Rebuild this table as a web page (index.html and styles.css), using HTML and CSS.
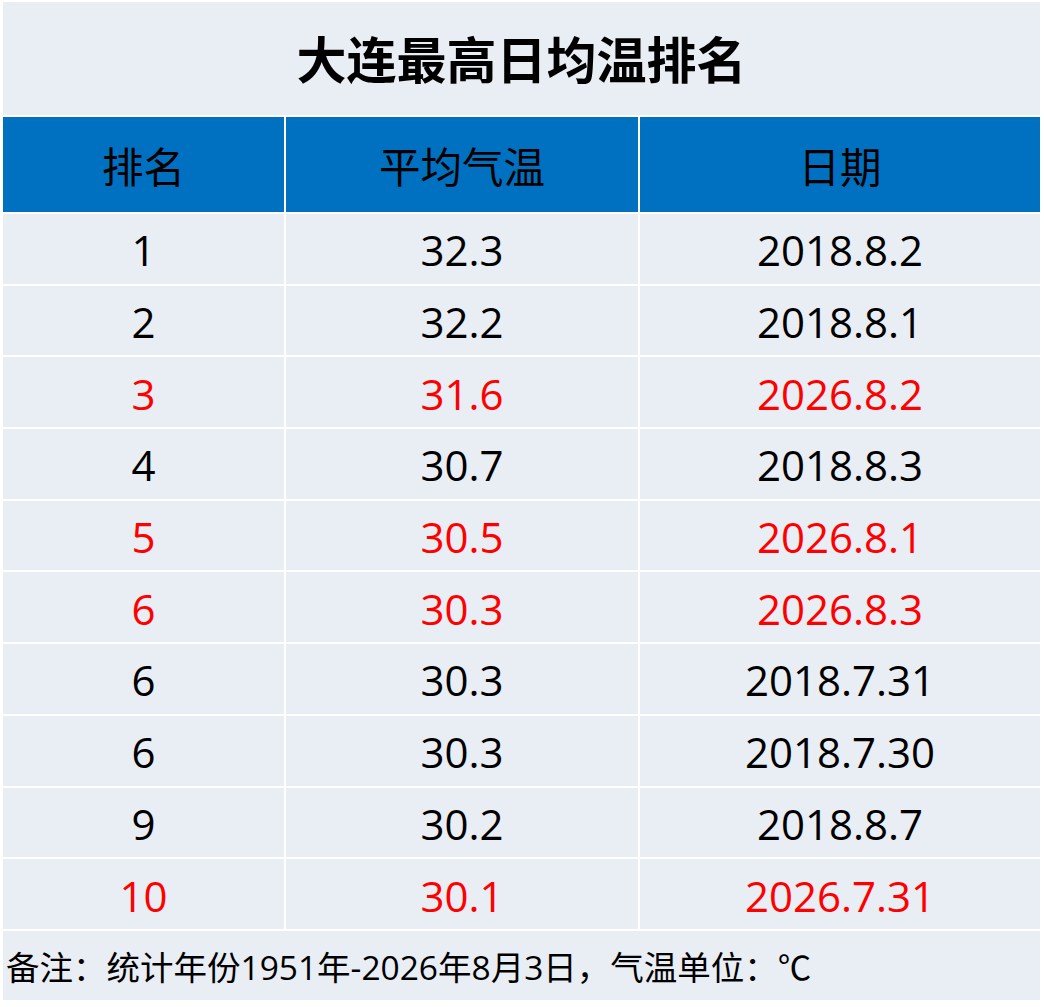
FILE: index.html
```html
<!DOCTYPE html>
<html lang="zh-CN">
<head>
<meta charset="utf-8">
<title>大连最高日均温排名</title>
<link rel="stylesheet" href="styles.css">
</head>
<body>
<div class="sheet">
  <div class="title">大连最高日均温排名</div>
  <div class="th">排名</div><div class="th">平均气温</div><div class="th">日期</div>
  <div class="td">1</div><div class="td">32.3</div><div class="td">2018.8.2</div>
  <div class="td">2</div><div class="td">32.2</div><div class="td">2018.8.1</div>
  <div class="td red">3</div><div class="td red">31.6</div><div class="td red">2026.8.2</div>
  <div class="td">4</div><div class="td">30.7</div><div class="td">2018.8.3</div>
  <div class="td red">5</div><div class="td red">30.5</div><div class="td red">2026.8.1</div>
  <div class="td red">6</div><div class="td red">30.3</div><div class="td red">2026.8.3</div>
  <div class="td">6</div><div class="td">30.3</div><div class="td">2018.7.31</div>
  <div class="td">6</div><div class="td">30.3</div><div class="td">2018.7.30</div>
  <div class="td">9</div><div class="td">30.2</div><div class="td">2018.8.7</div>
  <div class="td red">10</div><div class="td red">30.1</div><div class="td red">2026.7.31</div>
  <div class="note">备注：统计年份1951年-2026年8月3日，气温单位：℃</div>
</div>
</body>
</html>
```

FILE: styles.css
```css
html, body {
  margin: 0;
  padding: 0;
  background: #ffffff;
}
body {
  font-family: "Open Sans", "Noto Sans CJK SC", sans-serif;
  color: #000;
}
.sheet {
  width: 1037px;
  margin: 2px 0 0 3px;
  display: grid;
  grid-template-columns: 281px 352px 400px;
  grid-template-rows: 113px 95px repeat(10, 69.7px) 69px;
  gap: 2px;
}
.title {
  grid-column: 1 / 4;
  background: #e9edf4;
  display: flex;
  align-items: center;
  justify-content: center;
  font-family: "Noto Sans CJK SC", sans-serif;
  font-size: 50px;
  font-weight: 700;
  padding-bottom: 4px;
}
.th {
  background: #0070c0;
  display: flex;
  align-items: center;
  justify-content: center;
  font-family: "Noto Sans CJK SC", sans-serif;
  font-size: 41.5px;
}
.td {
  background: #e9edf4;
  display: flex;
  align-items: center;
  justify-content: center;
  font-size: 42px;
  padding-top: 2px;
}
.red {
  color: #ff0000;
}
.note {
  grid-column: 1 / 4;
  background: #e9edf4;
  display: flex;
  align-items: center;
  padding-left: 3px;
  font-size: 33.5px;
}
```
